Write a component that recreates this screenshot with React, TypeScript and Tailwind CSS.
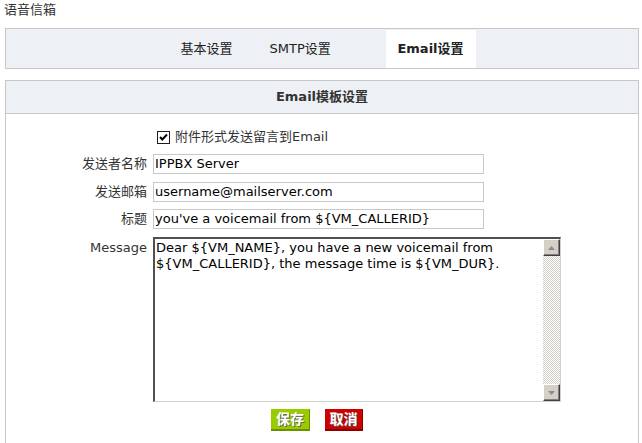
import React from "react";

const font = "font-['DejaVu_Sans','Noto_Sans_CJK_SC',sans-serif]";

const Field = ({ label, value }: { label: string; value: string }) => (
  <div className="flex items-center h-[20px]">
    <div className="w-[147px] shrink-0 pr-[6px] text-right text-[13px] text-[#333]">{label}</div>
    <div className="w-[331px] h-[20px] border border-[#c8c8c8] bg-white px-[1px] flex items-center text-[13px] text-black whitespace-nowrap overflow-hidden">
      {value}
    </div>
  </div>
);

const ScrollButton = ({ up }: { up?: boolean }) => (
  <div className="w-[17px] h-[17px] bg-[#d4d0c8] border-t border-l border-t-white border-l-white border-r border-b border-r-[#404040] border-b-[#404040] flex items-center justify-center shadow-[inset_-1px_-1px_0_#808080]">
    <svg width="7" height="4" viewBox="0 0 7 4">
      {up ? <path d="M3.5 0 L7 4 L0 4 Z" fill="#8c8c8c" /> : <path d="M0 0 L7 0 L3.5 4 Z" fill="#8c8c8c" />}
    </svg>
  </div>
);

export default function App() {
  return (
    <div className={`${font} w-[642px] h-[443px] overflow-hidden bg-white text-[#333]`}>
      <div className="h-[28px] pl-[4px] pt-[2px] text-[13px] leading-[16px] text-[#333]">语音信箱</div>

      <div className="mx-[5px] w-[634px] h-[41px] border border-[#c8c8c8] bg-[#edf1f5] pt-[1px] flex justify-center">
        <div className="w-[89px] h-[38px] pl-[12px] flex items-center text-[13px] text-[#222]">基本设置</div>
        <div className="w-[128px] h-[38px] pl-[12px] flex items-center text-[13px] text-[#222]">SMTP设置</div>
        <div className="w-[90px] h-[38px] bg-white flex items-center justify-center text-[13px] font-bold text-[#222]">Email设置</div>
      </div>

      <div className="mx-[5px] mt-[11px] w-[634px] border-x border-t border-[#c8c8c8] h-[400px]">
        <div className="h-[33px] bg-[#edf1f5] border-b border-[#c8c8c8] flex items-center justify-center text-[13px] font-bold text-[#333]">
          Email模板设置
        </div>

        <div className="pt-[13px] flex flex-col">
          <div className="h-[20px] flex items-center pl-[151px]">
            <div className="w-[13px] h-[13px] border border-[#1c1c1c] bg-white flex items-center justify-center">
              <svg width="9" height="9" viewBox="0 0 9 9">
                <path d="M1 4 L3.3 6.5 L8 1.5" stroke="#000" strokeWidth="2" fill="none" />
              </svg>
            </div>
            <span className="ml-[5px] text-[13px] text-[#333]">附件形式发送留言到Email</span>
          </div>

          <div className="mt-[7px]">
            <Field label="发送者名称" value="IPPBX Server" />
          </div>
          <div className="mt-[8px]">
            <Field label="发送邮箱" value="username@mailserver.com" />
          </div>
          <div className="mt-[7px]">
            <Field label="标题" value="you've a voicemail from ${VM_CALLERID}" />
          </div>

          <div className="mt-[8px] flex items-start">
            <div className="w-[147px] shrink-0 pr-[6px] pt-[1px] text-right text-[13px] text-[#333]">Message</div>
            <div className="w-[408px] h-[165px] border-t-2 border-l-2 border-t-[#505050] border-l-[#505050] border-r border-b border-r-[#d4d0c8] border-b-[#d4d0c8] bg-white flex">
              <div className="flex-1 pl-[1px] pt-[1px] text-[13px] leading-[16px] text-black">
                Dear ${"{"}VM_NAME{"}"}, you have a new voicemail from
                <br />
                ${"{"}VM_CALLERID{"}"}, the message time is ${"{"}VM_DUR{"}"}.
              </div>
              <div className="w-[17px] flex flex-col">
                <ScrollButton up />
                <div className="flex-1 bg-[repeating-conic-gradient(#d4d0c8_0%_25%,#ffffff_0%_50%)] bg-[length:2px_2px]" />
                <ScrollButton />
              </div>
            </div>
          </div>

          <div className="mt-[7px] flex pl-[265px] gap-[15px]">
            <button className="w-[39px] h-[22px] bg-[#99cc00] border-b-2 border-r border-b-[#6b8f00] border-r-[#6b8f00] text-[14px] font-bold text-white [text-shadow:1px_1px_0_#666] leading-[20px]">
              保存
            </button>
            <button className="w-[38px] h-[22px] bg-[#cc0000] border-b-2 border-r border-b-[#8a0000] border-r-[#8a0000] text-[14px] font-bold text-white [text-shadow:1px_1px_0_#666] leading-[20px]">
              取消
            </button>
          </div>
        </div>
      </div>
    </div>
  );
}
